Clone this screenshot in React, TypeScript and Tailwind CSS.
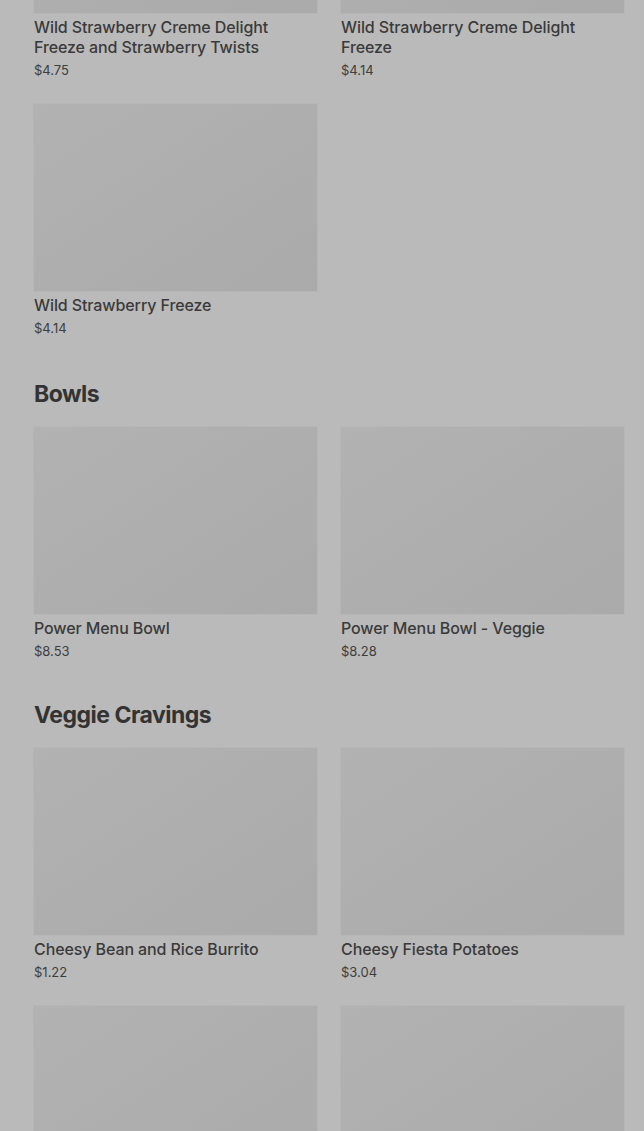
import React from 'react';

interface Item {
  name?: string;
  price?: string;
}

interface Section {
  title?: string;
  items: Item[];
}

const sections: Section[] = [
  {
    items: [
      { name: 'Wild Strawberry Creme Delight Freeze and Strawberry Twists', price: '$4.75' },
      { name: 'Wild Strawberry Creme Delight Freeze', price: '$4.14' },
      { name: 'Wild Strawberry Freeze', price: '$4.14' },
    ],
  },
  {
    title: 'Bowls',
    items: [
      { name: 'Power Menu Bowl', price: '$8.53' },
      { name: 'Power Menu Bowl - Veggie', price: '$8.28' },
    ],
  },
  {
    title: 'Veggie Cravings',
    items: [
      { name: 'Cheesy Bean and Rice Burrito', price: '$1.22' },
      { name: 'Cheesy Fiesta Potatoes', price: '$3.04' },
      // below the fold, only the photos show
      {},
      {},
    ],
  },
];

function ItemCard({ item }: { item: Item }) {
  return (
    <div className="flex flex-col">
      <div className="h-[187px] w-full bg-gradient-to-br from-[#b2b2b2] to-[#aaaaaa] shadow-[0_0_0_1px_rgba(0,0,0,0.02)]" />
      {item.name && (
        <div className="mt-1 text-[16px] leading-5 font-medium text-[#3a3a3a] tracking-[-0.1px]">{item.name}</div>
      )}
      {item.price && (
        <div className="mt-1 text-[13px] leading-[18px] text-[#3e3e3e]">{item.price}</div>
      )}
    </div>
  );
}

function App() {
  return (
    <div
      className="min-h-screen bg-[#bababa] overflow-hidden"
      style={{ fontFamily: 'Inter, "Noto Sans", sans-serif' }}
    >
      <div className="h-[1131px] overflow-hidden">
        <div className="pl-[34px] pr-5 -mt-[174px]">
          {sections.map((section, i) => (
            <div key={i} className={i === 0 ? 'pb-[2px]' : ''}>
              {section.title && (
                <h2 className="mt-[39px] mb-[17px] text-[23px] leading-8 font-bold text-[#333333] tracking-[-0.5px]">
                  {section.title}
                </h2>
              )}
              <div className="grid grid-cols-2 gap-x-6 gap-y-[25px]">
                {section.items.map((item, j) => (
                  <ItemCard key={j} item={item} />
                ))}
              </div>
            </div>
          ))}
        </div>
      </div>
    </div>
  );
}

export default App;
